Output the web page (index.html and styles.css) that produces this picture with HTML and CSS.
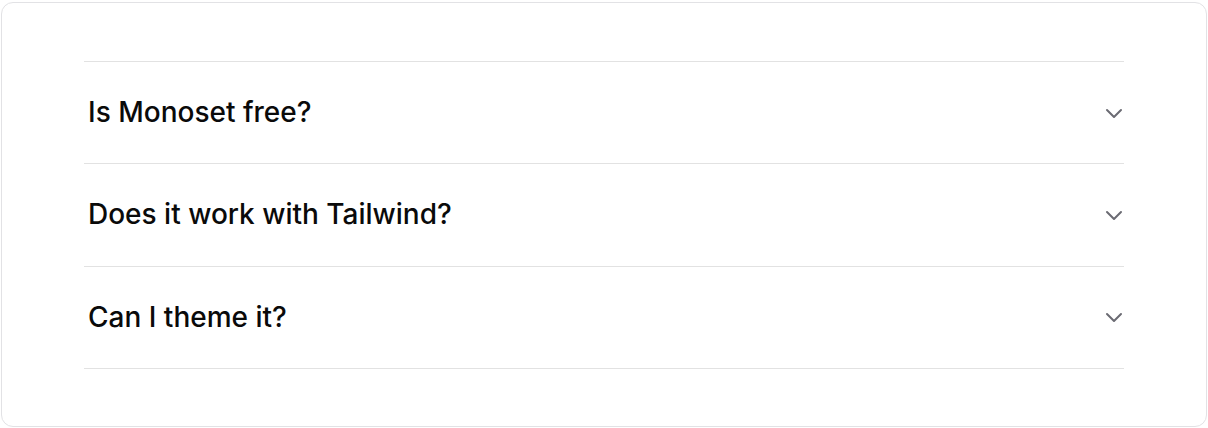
FILE: index.html
```html
<!DOCTYPE html>
<html lang="en">
<head>
  <meta charset="UTF-8" />
  <meta name="viewport" content="width=device-width, initial-scale=1.0" />
  <title>FAQ</title>
  <link rel="stylesheet" href="styles.css">
</head>
<body>
  <div class="card">
    <div class="faq">
      <div class="faq-item">
        <button class="faq-trigger">
          <span>Is Monoset free?</span>
          <svg class="chevron" viewBox="0 0 20 20"><path d="M3 7l7 7 7-7" /></svg>
        </button>
      </div>
      <div class="faq-item">
        <button class="faq-trigger">
          <span>Does it work with Tailwind?</span>
          <svg class="chevron" viewBox="0 0 20 20"><path d="M3 7l7 7 7-7" /></svg>
        </button>
      </div>
      <div class="faq-item">
        <button class="faq-trigger">
          <span>Can I theme it?</span>
          <svg class="chevron" viewBox="0 0 20 20"><path d="M3 7l7 7 7-7" /></svg>
        </button>
      </div>
    </div>
  </div>
</body>
</html>
```

FILE: styles.css
```css
* {
  box-sizing: border-box;
}

body {
  margin: 0;
  padding: 2px 1px 1px 1px;
  background: #ffffff;
  font-family: Inter, "Noto Sans", sans-serif;
  color: #0a0a0a;
}

.card {
  border: 1px solid #e2e2e5;
  border-radius: 12px;
  padding: 58px 82px 57px;
  height: 425px;
}

.faq {
  border-top: 1px solid #e2e2e2;
}

.faq-item {
  border-bottom: 1px solid #e2e2e2;
}

.faq-trigger {
  display: flex;
  align-items: center;
  justify-content: space-between;
  width: 100%;
  padding: 32px 0 32px 4px;
  border: none;
  background: none;
  font-family: inherit;
  font-size: 28px;
  font-weight: 450;
  line-height: 37.34px;
  color: #0a0a0a;
  text-align: left;
  cursor: pointer;
}

.chevron {
  width: 20px;
  height: 20px;
  fill: none;
  stroke: #6b6b73;
  stroke-width: 2;
  stroke-linecap: round;
  stroke-linejoin: round;
}
```
